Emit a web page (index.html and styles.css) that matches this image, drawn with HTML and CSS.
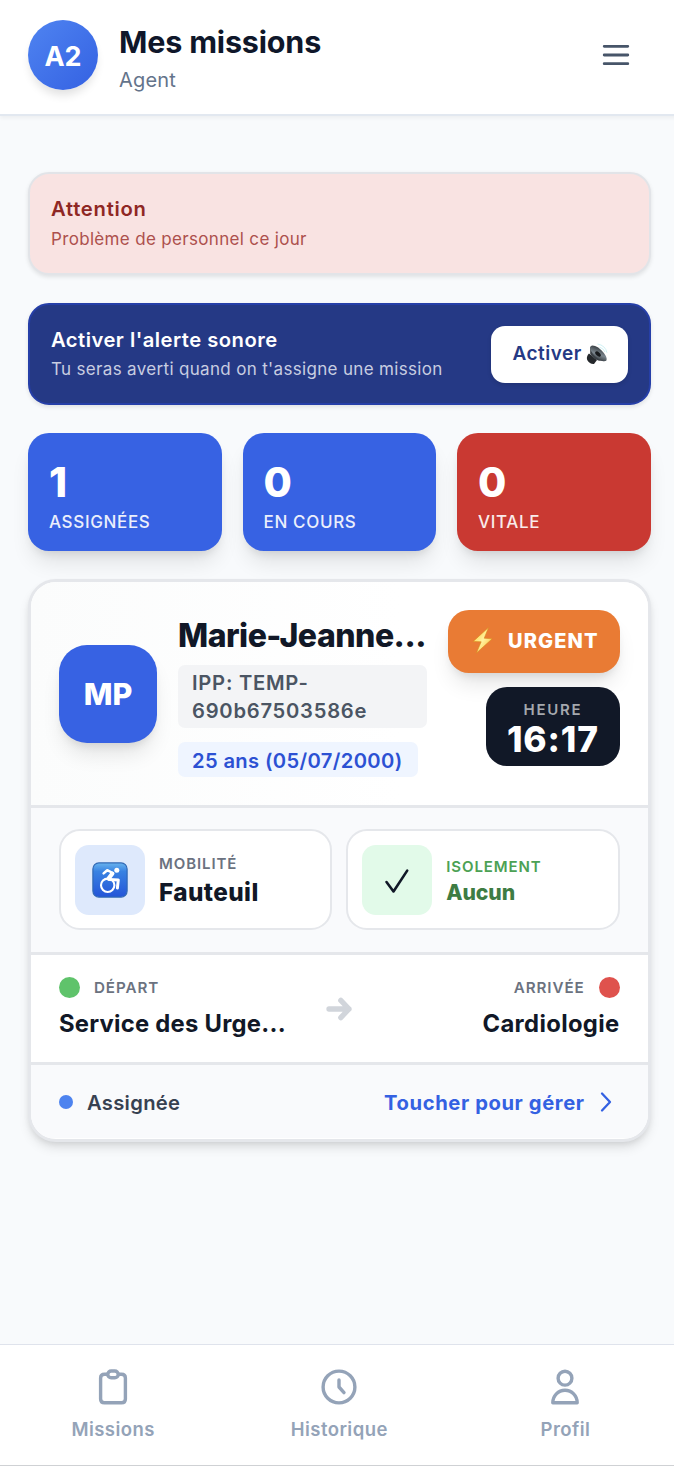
FILE: index.html
```html
<!DOCTYPE html>
<html lang="fr">
<head>
<meta charset="utf-8">
<title>Mes missions</title>
<link rel="stylesheet" href="styles.css">
</head>
<body>
<div class="app">
  <header class="header">
    <div class="avatar"><span>A2</span></div>
    <div class="header-text">
      <h1 class="title"><span>Mes missions</span></h1>
      <p class="role"><span>Agent</span></p>
    </div>
    <svg class="menu" width="28" height="22" viewBox="0 0 28 22" fill="none" stroke="#475569" stroke-width="2.8" stroke-linecap="round"><path d="M2.2 2.3h23.6M2.2 11h23.6M2.2 19.7h23.6"/></svg>
  </header>

  <main class="main">
    <section class="notice notice-danger">
      <div>
        <h2 class="notice-title">Attention</h2>
        <p class="notice-sub">Problème de personnel ce jour</p>
      </div>
    </section>

    <section class="notice notice-sound">
      <div>
        <h2 class="notice-title sound-title">Activer l'alerte sonore</h2>
        <p class="notice-sub sound-sub">Tu seras averti quand on t'assigne une mission</p>
      </div>
      <button class="activate"><span>Activer</span>
        <svg width="22" height="22" viewBox="0 0 22 22">
          <defs><linearGradient id="cone" x1="0" y1="0" x2="1" y2="1"><stop offset="0" stop-color="#25292d"/><stop offset=".55" stop-color="#7b868e"/><stop offset="1" stop-color="#24282c"/></linearGradient></defs>
          <path d="M3 10.5Q0 13.5 1.2 17Q3.8 21.3 8 20.9L11 17Z" fill="#24272b"/>
          <path d="M4.2 3.8L4.2 11Q7.5 16.5 13 17.7L20.6 17.8Z" fill="#3b4147"/>
          <ellipse cx="12.4" cy="10.4" rx="10.5" ry="4.4" transform="rotate(43 12.4 10.4)" fill="url(#cone)"/>
          <ellipse cx="12" cy="11" rx="3.4" ry="1.9" transform="rotate(44 12 11)" fill="#17191c"/>
          <path d="M11.5 1Q19.5 2.5 21 9.8M13.5 4.2Q17.5 5.3 19 9" fill="none" stroke="#c9eef2" stroke-width=".9"/>
        </svg>
      </button>
    </section>

    <section class="stats">
      <div class="stat"><strong>1</strong><span>ASSIGNÉES</span></div>
      <div class="stat"><strong>0</strong><span>EN COURS</span></div>
      <div class="stat stat-red"><strong>0</strong><span>VITALE</span></div>
    </section>

    <article class="card">
      <div class="patient">
        <div class="initials"><span>MP</span></div>
        <div class="identity">
          <h3 class="name">Marie-Jeanne...</h3>
          <div class="ipp">IPP: TEMP-<br>690b67503586e</div>
          <div class="age">25 ans (05/07/2000)</div>
        </div>
        <div class="badges">
          <div class="urgent">
            <svg width="22" height="30" viewBox="0 0 22 30"><defs><linearGradient id="bolt" x1="0" y1="0" x2="1" y2="1"><stop offset="0" stop-color="#ffc52e"/><stop offset=".5" stop-color="#fff3a0"/><stop offset="1" stop-color="#ffb321"/></linearGradient></defs><path d="M16.5 1.5L1.2 15.4L9.2 15.8L4.4 27L20.2 12.8L12.2 12.2Z" fill="url(#bolt)" stroke="#d98b1c" stroke-width=".6"/></svg>
            <span>URGENT</span>
          </div>
          <div class="hour"><small>HEURE</small><strong>16:17</strong></div>
        </div>
      </div>

      <div class="care">
        <div class="care-box">
          <div class="care-icon">
            <svg width="36" height="36" viewBox="0 0 36 36" fill="none" stroke="#fff" stroke-linecap="round" stroke-linejoin="round">
              <defs><linearGradient id="chair" x1="0" y1="0" x2="0" y2="1"><stop offset="0" stop-color="#69b4ee"/><stop offset=".25" stop-color="#3982e2"/><stop offset="1" stop-color="#2455d8"/></linearGradient></defs>
              <rect x=".9" y=".9" width="34.2" height="34.2" rx="6" fill="url(#chair)" stroke="#3169b5" stroke-width="1.2"/>
              <circle cx="24.8" cy="8.2" r="2.5" fill="#fff" stroke="none"/>
              <path d="M11.6 11.4L15.2 8.2L20.8 11" stroke-width="2.5"/>
              <path d="M20.4 11.6L16.6 16.6" stroke-width="4.2"/>
              <path d="M17.4 17.6L26.3 17.9L25.4 26" stroke-width="3"/>
              <circle cx="15.7" cy="23.3" r="6.7" stroke-width="2.1"/>
            </svg>
          </div>
          <div class="care-text"><small>MOBILITÉ</small><strong>Fauteuil</strong></div>
        </div>
        <div class="care-box care-green">
          <div class="care-icon">
            <svg width="26" height="26" viewBox="0 0 26 26" fill="none" stroke="#111827" stroke-width="2.6" stroke-linecap="round" stroke-linejoin="round"><path d="M2.5 14L9.5 23.5L23.2 2.6"/></svg>
          </div>
          <div class="care-text"><small>ISOLEMENT</small><strong>Aucun</strong></div>
        </div>
      </div>

      <div class="route">
        <div class="stop">
          <div class="stop-label"><i class="dot dot-green"></i><span>DÉPART</span></div>
          <div class="place place-from">Service des Urge...</div>
        </div>
        <svg class="arrow" width="28" height="28" viewBox="0 0 28 28" fill="none" stroke="#d1d5db" stroke-width="5.3" stroke-linecap="round" stroke-linejoin="round"><path d="M4 14H24M15.8 5.4L24 14L15.8 22.6"/></svg>
        <div class="stop stop-end">
          <div class="stop-label"><span>ARRIVÉE</span><i class="dot dot-red"></i></div>
          <div class="place place-to">Cardiologie</div>
        </div>
      </div>

      <div class="status">
        <i class="dot-small"></i><span class="state">Assignée</span>
        <span class="manage">Toucher pour gérer</span>
        <svg width="14" height="22" viewBox="0 0 14 22" fill="none" stroke="#3461e2" stroke-width="2.3" stroke-linecap="round" stroke-linejoin="round"><path d="M3 2.5L11 11L3 19.5"/></svg>
      </div>
    </article>
  </main>

  <nav class="nav">
    <a class="tab"><svg width="38" height="38" viewBox="0 0 38 38" fill="none" stroke="#94a3b8" stroke-width="3.4" stroke-linejoin="round"><path d="M13.8 6.2H10.5Q6.6 6.2 6.6 10V31Q6.6 34.8 10.5 34.8H27.5Q31.4 34.8 31.4 31V10Q31.4 6.2 27.5 6.2H24.2"/><rect x="13.8" y="3" width="10.4" height="6.8" rx="3.4"/></svg><span class="t1">Missions</span></a>
    <a class="tab"><svg width="38" height="38" viewBox="0 0 38 38" fill="none" stroke="#94a3b8" stroke-width="3.4" stroke-linecap="round" stroke-linejoin="round"><circle cx="19" cy="19" r="15.9"/><path d="M19 12V19L24 24.6"/></svg><span class="t2">Historique</span></a>
    <a class="tab"><svg width="38" height="38" viewBox="0 0 38 38" fill="none" stroke="#94a3b8" stroke-width="3.4" stroke-linejoin="round"><circle cx="19" cy="10.2" r="6.9"/><path d="M6.8 34.8A12.2 12.6 0 0 1 31.2 34.8Z"/></svg><span class="t3">Profil</span></a>
  </nav>
</div>
</body>
</html>
```
FILE: styles.css
```css
* { box-sizing: border-box; margin: 0; padding: 0; }
body {
  width: 674px;
  height: 1466px;
  overflow: hidden;
  background: #f8fafc;
  color: #111827;
  font-family: Inter, "Liberation Sans", sans-serif;
  white-space: nowrap;
}
svg { display: block; flex: none; }
.app { width: 678.6px; height: 1466px; display: flex; flex-direction: column; }

.header {
  height: 116px;
  display: flex;
  align-items: center;
  padding: 0 49px 4px 28px;
  background: #fff;
  border-bottom: 2px solid #e2e8f0;
  box-shadow: 0 2px 4px rgba(0, 0, 0, .05);
  flex: none;
}
.avatar {
  width: 70px; height: 70px;
  border-radius: 50%;
  display: grid; place-items: center;
  background: linear-gradient(135deg, #4f84f1, #3461e2);
  box-shadow: 0 7px 10px -2px rgba(0, 0, 0, .12);
  color: #fff;
  font-size: 27px; font-weight: 700;
}
.avatar span { padding-top: 2px; }
.header-text { flex: 1; margin-left: 21px; padding-top: 6px; }
.title { font-size: 30.5px; line-height: 38px; font-weight: 700; letter-spacing: -.18px; color: #0f172a; }
.role { font-size: 20px; line-height: 28px; margin-top: 5px; letter-spacing: .2px; color: #64748b; }

.main { flex: 1; padding: 56px 28px 0; display: flex; flex-direction: column; }
.notice {
  height: 102.5px;
  border-radius: 21px;
  border: 2px solid #e2e4e8;
  padding: 0 21px 1px;
  display: flex;
  align-items: center;
  justify-content: space-between;
  box-shadow: 0 2px 4px rgba(0, 0, 0, .1);
}
.notice-danger { background: #f9e3e2; color: #8f2724; }
.notice-title { font-size: 20.2px; line-height: 28px; font-weight: 600; letter-spacing: .75px; }
.sound-title { letter-spacing: .48px; }
.notice-sub { font-size: 17px; line-height: 24px; margin-top: 4px; letter-spacing: .33px; color: #ad504d; }
.notice-sound { margin-top: 28px; padding-bottom: 0; background: #253985; border-color: #263fa8; color: #fff; }
.sound-sub { margin-top: 3px; color: #c8cde1; }
.activate {
  width: 137px; height: 57px;
  margin-top: 1px;
  display: flex; align-items: center; justify-content: center; gap: 4px;
  border: 0; border-radius: 14px;
  background: #fff; color: #253985;
  font: 600 19px/28px Inter, sans-serif;
  letter-spacing: .5px;
  box-shadow: 0 2px 4px rgba(0, 0, 0, .12);
}
.activate span { margin-left: 2px; }

.stats { margin-top: 28px; display: grid; grid-template-columns: repeat(3, 1fr); gap: 21px; }
.stat {
  height: 118px;
  padding: 25px 21px 0;
  border-radius: 21px;
  background: #3762e3;
  color: #fff;
  box-shadow: 0 15px 22px -5px rgba(0, 0, 0, .11), 0 6px 10px -4px rgba(0, 0, 0, .1);
}
.stat-red { background: #c93932; }
.stat strong { display: block; font-size: 41px; line-height: 48px; font-weight: 800; }
.stat span { display: block; margin-top: 4px; font-size: 17px; line-height: 24px; font-weight: 500; letter-spacing: .65px; opacity: .9; }

.card {
  margin-top: 28px;
  height: 563px;
  border: 3.5px solid #e5e7eb;
  border-radius: 28px;
  overflow: hidden;
  background: #fff;
  box-shadow: 0 7px 11px -1px rgba(0, 0, 0, .1), 0 3px 6px -2px rgba(0, 0, 0, .1);
}
.patient {
  height: 226px;
  padding: 0 28px;
  display: flex;
  align-items: center;
  border-bottom: 3px solid #e5e7eb;
  background: linear-gradient(90deg, #fbfcfc, #fff 60%);
}
.initials {
  width: 98px; height: 98px;
  border-radius: 28px;
  display: grid; place-items: center;
  background: #3762e3;
  box-shadow: 0 15px 22px -5px rgba(0, 0, 0, .11), 0 6px 10px -4px rgba(0, 0, 0, .1);
  color: #fff;
  font-size: 30.5px; font-weight: 800;
}
.identity { margin-left: 21px; width: 249px; padding-top: 4px; }
.name { font-size: 32px; line-height: 42px; font-weight: 800; letter-spacing: -.5px; }
.ipp, .age { border-radius: 7px; padding: 4.5px 14px 2.5px; font-size: 20.2px; line-height: 28px; font-weight: 600; letter-spacing: .35px; }
.ipp { margin-top: 8px; letter-spacing: .75px; background: #f3f4f6; color: #4b5563; }
.age { margin-top: 14px; width: 240px; padding: 5px 14px 2px; background: #eff5ff; color: #2c51d3; }
.badges { margin-left: auto; margin-top: -11px; display: flex; flex-direction: column; align-items: flex-end; gap: 14px; }
.urgent {
  width: 171.5px; height: 62.5px;
  display: flex; align-items: center; gap: 14px;
  padding-left: 24px;
  border-radius: 21px;
  background: #e97b34; color: #fff;
  font-size: 20px; font-weight: 800; letter-spacing: 1.1px;
  box-shadow: 0 15px 22px -5px rgba(0, 0, 0, .11), 0 6px 10px -4px rgba(0, 0, 0, .1);
}
.hour {
  width: 133.5px; height: 79.5px;
  padding-top: 12px;
  border-radius: 21px;
  background: #111827; color: #fff;
  text-align: center;
}
.hour small { display: block; font-size: 15px; line-height: 22px; font-weight: 600; letter-spacing: 1.7px; color: #a5a8ae; }
.hour strong { display: block; padding-top: 1px; font-size: 35.3px; line-height: 36px; font-weight: 800; letter-spacing: .8px; }

.care {
  height: 146.5px;
  padding: 21px 28px 0;
  display: grid; grid-template-columns: 1fr 1fr; gap: 14px;
  align-items: start;
  background: #f9fafc;
  border-bottom: 3px solid #e5e7eb;
}
.care-box {
  height: 101px;
  display: flex; align-items: center; gap: 14px;
  padding-left: 14px;
  border: 2px solid #e5e7eb;
  border-radius: 21px;
  background: #fff;
}
.care-icon { width: 70px; height: 70px; border-radius: 14px; display: grid; place-items: center; background: #dee9fc; }
.care-text { padding-top: 3px; }
.care-text small { display: block; font-size: 15px; line-height: 22px; font-weight: 600; letter-spacing: .9px; color: #6b7280; }
.care-text strong { display: block; font-size: 24.3px; line-height: 34px; font-weight: 800; letter-spacing: .4px; }
.care-green .care-icon { background: #e2fae9; }
.care-green .care-icon svg { margin-top: 2px; }
.care-green small { color: #4ca154; }
.care-green strong { font-size: 21.2px; line-height: 28px; letter-spacing: -.1px; color: #3e7c43; }

.route {
  height: 110.5px;
  padding: 1px 28px 0;
  display: grid; grid-template-columns: 1fr 28px 1fr;
  align-items: center;
  border-bottom: 3px solid #e5e7eb;
}
.stop-label { display: flex; align-items: center; gap: 14px; height: 22px; font-size: 15.2px; font-weight: 600; letter-spacing: .9px; color: #6b7280; }
.stop-end { text-align: right; }
.stop-end .stop-label { justify-content: flex-end; }
.dot { width: 21px; height: 21px; border-radius: 50%; }
.dot-green { background: #5fc36b; }
.dot-red { background: #df524d; }
.place { margin-top: 8px; font-size: 23.8px; line-height: 34px; font-weight: 700; letter-spacing: .25px; }
.place-to { letter-spacing: .35px; }

.status { height: 73px; padding: 0 35px 0 28px; display: flex; align-items: center; background: #f9fafc; font-size: 20.2px; }
.status span { padding-top: 2px; }
.dot-small { width: 14px; height: 14px; border-radius: 50%; background: #4d83ef; }
.state { margin-left: 14px; font-weight: 600; letter-spacing: .3px; color: #374151; }
.manage { margin-left: auto; margin-right: 14px; font-weight: 700; letter-spacing: .6px; color: #3461e2; }

.nav {
  flex: none;
  height: 122px;
  display: grid; grid-template-columns: repeat(3, 1fr);
  background: #fff;
  border-top: 1px solid #dfe3ec;
  border-bottom: 1px solid #cfd1d4;
}
.tab { display: flex; flex-direction: column; align-items: center; padding-top: 23px; color: #94a3b8; font-size: 18.5px; line-height: 26px; font-weight: 600; letter-spacing: .45px; }
.tab span { margin-top: 10px; }
```
